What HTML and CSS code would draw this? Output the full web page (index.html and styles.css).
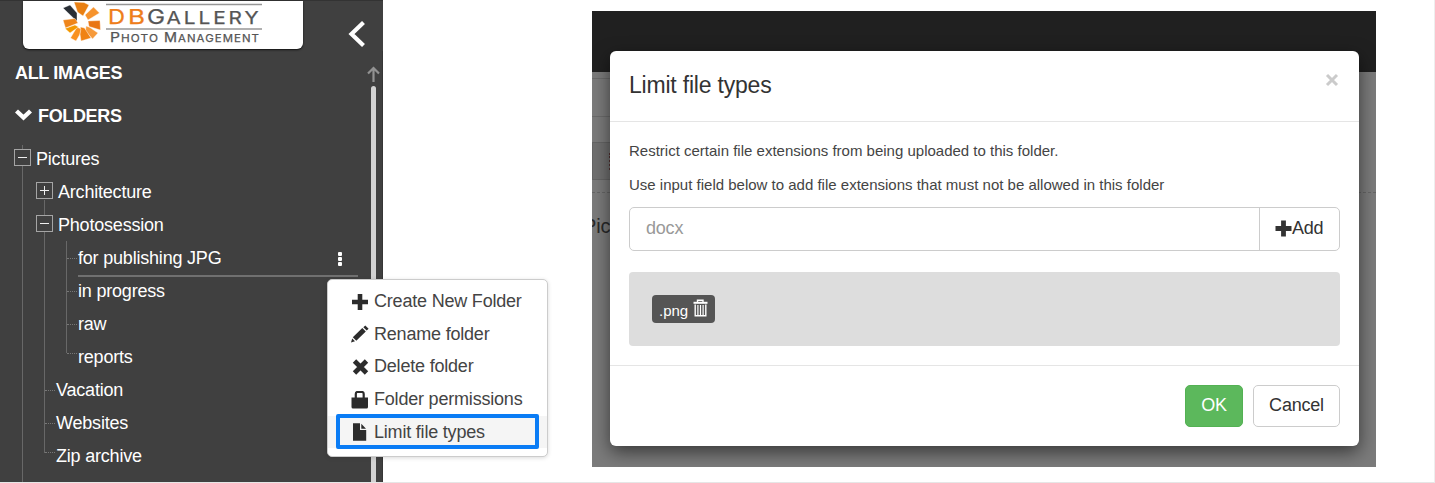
FILE: index.html
```
<!DOCTYPE html>
<html lang="en">
<head>
<meta charset="utf-8">
<title>DBGallery</title>
<link rel="stylesheet" href="styles.css">
</head>
<body>
<div class="page">
  <aside class="sidebar">
    <header class="brand">
      <div class="logo">
        <svg width="280" height="48" viewBox="23 1 280 48">
          <g stroke="#fff" stroke-width=".4">
            <path fill="#292e35" d="M63 8L70 5L77 13L77 21.500Z"/>
            <path fill="#e98013" d="M74 2L84 2.500L89 5L83 16L77.500 12Z"/>
            <path fill="#f6932d" d="M85 15L93.500 7L99.500 13L88 20Z"/>
            <path fill="#e97514" d="M88 21L100 20.500L100.500 30L89 26.500Z"/>
            <path fill="#f69a3b" d="M86 26L90 27.500L98 33L92.500 39L85.500 31Z"/>
            <path fill="#f08213" d="M80.500 27L84.500 28L91 38L81 41L80 34Z"/>
            <path fill="#f99221" d="M77 27L81 29L79.500 35L76 41L70.500 38Z"/>
            <path fill="#f39800" d="M75 25L78.500 27L70 33L65 28.500Z"/>
            <path fill="#ef851a" d="M63 20L75 18.500L78 23L65.500 28Z"/>
          </g>
          <path d="M106 4.500H262M106 29H262" stroke="#969696" stroke-width="1.300"/>
          <g class="logo-text">
            <text x="108" y="23.500" font-size="20" textLength="17" lengthAdjust="spacingAndGlyphs" fill="#ee7d1b" stroke="#ee7d1b">D</text>
            <text x="128" y="23.500" font-size="20" textLength="17" lengthAdjust="spacingAndGlyphs" fill="#ee7d1b" stroke="#ee7d1b">B</text>
            <text x="147" y="23.500" font-size="20" textLength="18" lengthAdjust="spacingAndGlyphs">G</text>
            <text class="wide" x="166.500" y="23.500" font-size="17" textLength="95" lengthAdjust="spacingAndGlyphs">ALLERY</text>
            <text x="110" y="42" font-size="12.500" textLength="10" lengthAdjust="spacingAndGlyphs">P</text>
            <text class="tight" x="121" y="42" font-size="10.500" textLength="38" lengthAdjust="spacingAndGlyphs">HOTO</text>
            <text x="164" y="42" font-size="12.500" textLength="13" lengthAdjust="spacingAndGlyphs">M</text>
            <text class="tight" x="178" y="42" font-size="10.500" textLength="82" lengthAdjust="spacingAndGlyphs">ANAGEMENT</text>
          </g>
        </svg>
      </div>
      <svg class="collapse" width="20" height="26" viewBox="0 0 20 26"><path d="M16.500 1.500L4.500 13L16.500 24.500" fill="none" stroke="#fff" stroke-width="4.200"/></svg>
    </header>
    <div class="scroll">
      <svg width="13" height="16" viewBox="0 0 13 16"><path d="M6.500 16V2M1 7.500L6.500 2L12 7.500" fill="none" stroke="#929292" stroke-width="2.200"/></svg>
      <div class="thumb"></div>
    </div>
    <nav class="nav">
      <h2 class="section">ALL IMAGES</h2>
      <h2 class="section"><svg width="17" height="12" viewBox="0 0 17 12"><path d="M1.500 2L8.500 8.500L15.500 2" fill="none" stroke="#fff" stroke-width="4.400"/></svg>FOLDERS</h2>
      <ul class="tree root">
        <li><div class="row"><i class="toggle"></i><span>Pictures</span></div>
          <ul class="tree second">
            <li><div class="row"><i class="toggle plus"></i><span>Architecture</span></div></li>
            <li><div class="row"><i class="toggle"></i><span>Photosession</span></div>
              <ul class="tree third">
                <li class="leaf"><div class="row active"><span>for publishing JPG</span><b class="dots"></b></div></li>
                <li class="leaf"><div class="row"><span>in progress</span></div></li>
                <li class="leaf"><div class="row"><span>raw</span></div></li>
                <li class="leaf last"><div class="row"><span>reports</span></div></li>
              </ul>
            </li>
            <li class="leaf"><div class="row"><span>Vacation</span></div></li>
            <li class="leaf"><div class="row"><span>Websites</span></div></li>
            <li class="leaf last"><div class="row"><span>Zip archive</span></div></li>
          </ul>
        </li>
      </ul>
    </nav>
  </aside>

  <main class="stage">
    <div class="topbar"></div>
    <div class="behind">
      <div class="band band-a"></div>
      <div class="band band-b"></div>
      <div class="tools"><i></i></div>
      <div class="dash"></div>
      <div class="crumb"><span>Pic</span></div>
    </div>
    <section class="dialog">
      <header class="dialog-head">
        <h1>Limit file types</h1>
        <svg width="14" height="14" viewBox="0 0 14 14"><path d="M2 2L12 12M12 2L2 12" stroke="#cbcbcb" stroke-width="3"/></svg>
      </header>
      <div class="dialog-body">
        <p>Restrict certain file extensions from being uploaded to this folder.</p>
        <p>Use input field below to add file extensions that must not be allowed in this folder</p>
        <div class="group">
          <div class="field">docx</div>
          <div class="add"><svg width="17" height="17" viewBox="0 0 17 17"><path d="M8.500 .5V16.500M.5 8.500H16.500" stroke="#333" stroke-width="4.800"/></svg><span>Add</span></div>
        </div>
        <div class="well">
          <div class="tag"><span>.png</span>
            <svg width="15" height="18" viewBox="0 0 15 18" fill="none" stroke="#fff"><path d="M4.500 3.500V1.200H10V3.500" stroke-width="1.400"/><path d="M.5 3.800H14.500" stroke-width="2"/><path d="M2.200 5.500V16.700H12.800V5.500" stroke-width="1.400"/><path d="M4.900 6V16M7.500 6V16M10.100 6V16" stroke-width="1.200"/></svg>
          </div>
        </div>
      </div>
      <footer class="dialog-foot">
        <div class="btn ok">OK</div>
        <div class="btn cancel">Cancel</div>
      </footer>
    </section>
  </main>

  <ul class="menu">
    <li><svg width="18" height="18" viewBox="0 0 18 18"><path d="M9 1V17M1 9H17" stroke="#2c2c2c" stroke-width="4.600" stroke-linejoin="round"/></svg><span>Create New Folder</span></li>
    <li><svg width="18" height="18" viewBox="0 0 18 18" fill="#2c2c2c"><path d="M0 17.500L1.200 13.600L4 16.200ZM1.800 12.300L11.300 3L14.800 6.500L5.300 15.800ZM12.300 2.200L14.300 .4L17.600 3.700L15.700 5.600Z"/></svg><span>Rename folder</span></li>
    <li><svg width="18" height="18" viewBox="0 0 18 18"><path d="M3.500 3L15.500 15M15.500 3L3.500 15" stroke="#2c2c2c" stroke-width="4.800"/></svg><span>Delete folder</span></li>
    <li><svg width="18" height="18" viewBox="0 0 18 18" fill="#2c2c2c"><path d="M.5 6.500H17V16Q17 17.500 15.500 17.500H2Q.5 17.500 .5 16Z"/><path d="M4.800 7V3Q4.800 1 6.500 1H11Q12.700 1 12.700 3V7" fill="none" stroke="#2c2c2c" stroke-width="2.200"/></svg><span>Folder permissions</span></li>
    <li class="current"><svg width="18" height="18" viewBox="0 0 18 18" fill="#2c2c2c"><path d="M2 .3H9V7H15.200V17.700H2ZM10.300 .8L15 5.700H10.300Z"/></svg><span>Limit file types</span></li>
  </ul>
</div>
</body>
</html>
```
FILE: styles.css
```
*, ::before, ::after { box-sizing: border-box; }
body {
  margin: 0;
  font-family: "Liberation Sans", Arial, sans-serif;
  font-size: 18px;
  letter-spacing: -.2px;
  color: #333;
  background: #fff;
}
.page {
  position: relative;
  display: flex;
  width: 1435px;
  height: 483px;
  overflow: hidden;
  border-right: 1px solid #eee;
  border-bottom: 1px solid #e6e6e6;
}
svg { display: block; flex: none; }
ul { list-style: none; margin: 0; padding: 0; }

/* Sidebar */
.sidebar {
  flex: none;
  display: grid;
  grid-template: 50px 1fr / 1fr 20px;
  width: 383px;
  height: 483px;
  background: #404040;
  color: #fff;
  border-top: 1px solid #333;
}
.brand {
  grid-column: 1 / 3;
  display: flex;
  align-items: flex-start;
  padding-left: 23px;
}
.logo {
  width: 280px;
  height: 48px;
  background: #fff;
  border-radius: 0 0 6px 6px;
  box-shadow: 0 1px 2px #111;
  overflow: hidden;
}
.logo-text { font-family: Inter, sans-serif; letter-spacing: 0; fill: #555; stroke: #555; stroke-width: .25px; }
.wide { letter-spacing: 2.4px; }
.tight { letter-spacing: 1px; }
.collapse { margin: 20px 0 0 44px; }
.nav { grid-column: 1; grid-row: 2; padding-top: 1px; }
.section {
  display: flex;
  align-items: center;
  gap: 6px;
  height: 43px;
  margin: 0;
  padding-left: 15px;
  font-size: 18px;
  font-weight: bold;
  letter-spacing: -.35px;
}
.section svg { margin-bottom: 3px; }
.scroll {
  grid-column: 2;
  grid-row: 2;
  display: flex;
  flex-direction: column;
  align-items: center;
  gap: 4px;
  padding: 15px 0 0 1px;
  border-right: 1px solid #363636;
}
.thumb { flex: 1; width: 5px; background: #d2d2d2; border-radius: 3px 3px 0 0; }

.row {
  display: flex;
  align-items: center;
  gap: 5px;
  height: 33px;
  white-space: nowrap;
}
.tree { position: relative; }
.tree li { position: relative; }
.root { margin-top: 5px; padding-left: 14px; }
.second { padding-left: 22px; }
.third { padding-left: 42px; }
.tree::before {
  content: "";
  position: absolute;
  width: 1px;
  background: #686868;
}
.root::before { left: 22px; top: 2px; height: 345px; }
.second::before { left: 30px; top: 24px; height: 253px; }
.third::before { left: 30px; top: -1px; height: 112px; }
.toggle {
  position: relative;
  flex: none;
  width: 17px;
  height: 17px;
  margin-bottom: 4px;
  border: 1px solid #a5a5a5;
  background: #404040;
}
.toggle::before, .plus::after {
  content: "";
  position: absolute;
  left: 3px;
  top: 7px;
  width: 9px;
  height: 1px;
  background: #eee;
}
.plus::after { transform: rotate(90deg); }
.second > .leaf > .row { padding-left: 20px; }
.leaf::before {
  content: "";
  position: absolute;
  left: 9px;
  top: 16px;
  width: 10px;
  border-top: 1px dotted #777;
}
.last::before { top: 12px; }
.third > .leaf::before { left: -11px; }
.active { position: relative; width: 280px; }
.active::after {
  content: "";
  position: absolute;
  left: 0;
  right: 0;
  bottom: -2px;
  height: 2px;
  background: #707070;
}
.dots {
  width: 4px;
  height: 4px;
  margin: -9px 16px 0 auto;
  background: #fff;
  box-shadow: 0 5px #fff, 0 10px #fff;
  border-radius: 1px;
}

/* Background application and dialog */
.stage {
  flex: none;
  display: grid;
  grid-template-rows: 61px 395px;
  width: 784px;
  height: 456px;
  margin: 11px 0 0 209px;
  overflow: hidden;
  background: #7b7b7b;
}
.topbar { grid-area: 1 / 1; background: #202020; }
.behind { grid-area: 2 / 1; }
.band { width: 19px; }
.band-a { height: 7px; border-bottom: 1px solid #6b6b6b; }
.band-b { height: 38px; border-bottom: 1px solid #6b6b6b; }
.tools {
  display: flex;
  align-items: center;
  width: 19px;
  height: 38px;
  margin-top: 25px;
  padding-left: 16px;
  border: 1px solid #656565;
  background: #707070;
}
.tools i { width: 2px; height: 17px; border-left: 2px dotted #533; }
.dash { margin-top: 12px; border-top: 1px dashed #666; }
.crumb { display: flex; width: 19px; height: 40px; margin-top: 22px; color: #292929; font-size: 20px; }
.crumb span { margin-left: -9px; }
.dialog {
  grid-area: 1 / 1 / 3 / 2;
  display: flex;
  flex-direction: column;
  width: 749px;
  height: 395px;
  margin: 40px 0 0 18px;
  background: #fff;
  border-radius: 6px;
  box-shadow: 0 6px 18px rgba(0, 0, 0, .55);
}
.dialog-head {
  display: flex;
  justify-content: space-between;
  height: 71px;
  padding: 21px 20px 0 19px;
  border-bottom: 1px solid #e5e5e5;
}
.dialog-head h1 { margin: 0; font-size: 23px; line-height: 26px; font-weight: normal; }
.dialog-head svg { margin-top: 1px; }
.dialog-body { height: 243px; padding: 19px 19px 0; }
.dialog-body p { margin: 0 0 14px; font-size: 15px; line-height: 20px; letter-spacing: 0; color: #444; }
.group { display: flex; height: 44px; margin-top: -2px; border: 1px solid #ccc; border-radius: 5px; }
.field { flex: 1; padding: 9px 16px; line-height: 22px; color: #999; }
.add {
  display: flex;
  align-items: center;
  width: 80px;
  padding: 0 0 2px 15px;
  border-left: 1px solid #ccc;
}
.well { height: 74px; margin-top: 21px; padding: 23px; background: #ddd; border-radius: 4px; }
.tag {
  display: flex;
  align-items: center;
  gap: 5px;
  width: 63px;
  height: 28px;
  padding-left: 7px;
  color: #fff;
  font-size: 15px;
  letter-spacing: 0;
  background: #555;
  border-radius: 4px;
}
.tag span { padding-top: 3px; }
.tag svg { margin-bottom: 2px; }
.dialog-foot {
  display: flex;
  justify-content: flex-end;
  gap: 10px;
  height: 81px;
  padding: 19px 19px 0;
  border-top: 1px solid #e5e5e5;
}
.btn { height: 42px; line-height: 38px; border: 1px solid #ccc; border-radius: 5px; text-align: center; }
.ok { width: 58px; color: #fff; background: #5cb85c; border-color: #53b153; }
.cancel { width: 87px; }

/* Context menu floating over the sidebar and page */
.menu {
  position: absolute;
  left: 327px;
  top: 279px;
  width: 221px;
  height: 178px;
  padding-top: 5.5px;
  background: #fff;
  border: 1px solid #ccc;
  border-radius: 5px;
  box-shadow: 0 1px 4px rgba(0, 0, 0, .15);
}
.menu li { position: relative; display: flex; align-items: center; gap: 5px; height: 32.6px; padding-left: 23px; white-space: nowrap; color: #444; }
.menu .current { background: #f5f5f5; }
.current::after {
  content: "";
  position: absolute;
  left: 8px;
  top: -2px;
  width: 203px;
  height: 35px;
  border: 4px solid #0a7cf5;
  border-radius: 2px;
}
```
